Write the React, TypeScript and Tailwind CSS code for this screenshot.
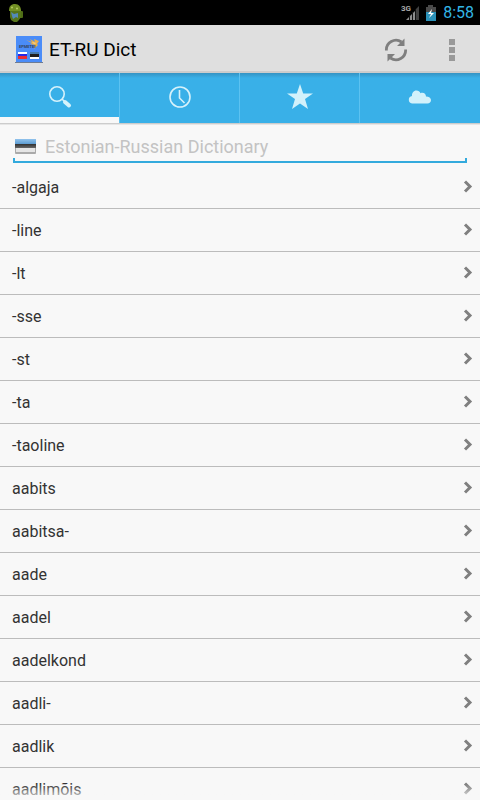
import React, { useState } from "react";

const words = [
  "-algaja", "-line", "-lt", "-sse", "-st", "-ta", "-taoline", "aabits",
  "aabitsa-", "aade", "aadel", "aadelkond", "aadli-", "aadlik", "aadlimõis",
];

function AndroidIcon() {
  return (
    <svg className="h-5 w-4" viewBox="0 0 16 20" aria-hidden="true">
      <rect x="11" y="8" width="4" height="7" rx="1" fill="#4e6c16" />
      <path d="M1 8C1 3 3 1 7 1s6 3 6 7z" fill="#728f24" />
      <path d="M2 8h11v6l-2 3-2 2H6l-3-2-1-3z" fill="#56741a" />
      <circle cx="4" cy="4.500" r="1" fill="#b8cc66" />
      <circle cx="9" cy="5.500" r="1" fill="#b8cc66" />
      <path d="M3 9l3 2 4-1v5l-2-1-3 2-1-3z" fill="#5289b8" />
    </svg>
  );
}

function AppLogo() {
  return (
    <svg className="h-7 w-7" viewBox="0 0 28 28" aria-hidden="true">
      <rect x="1" y="0" width="26" height="26" fill="#4a8cf8" />
      <rect x="0" y="26" width="28" height="1" fill="#6d7c94" />
      <path d="M11 4l6 2-2-3 5 3-1-3 5 2-2 3 1 1-4 4 1-4-5-1 2-1z" fill="#e9ad48" />
      <path d="M17 6l5 1-3 1z" fill="#f4d28c" />
      <text x="4" y="12" fontSize="4" fontWeight="bold" fontFamily="Roboto, sans-serif" fill="#35435f">EPMETEI</text>
      <rect x="3" y="16" width="9" height="7" fill="#fff" />
      <rect x="3" y="18" width="9" height="3" fill="#2828e8" />
      <rect x="3" y="20" width="9" height="3" fill="#e82e39" />
      <rect x="15" y="16" width="9" height="2" fill="#477baf" />
      <rect x="15" y="18" width="9" height="3" fill="#202020" />
      <rect x="15" y="21" width="9" height="2" fill="#fff" />
    </svg>
  );
}

function SignalIcon() {
  return (
    <svg className="h-5 w-5" viewBox="0 0 20 20" aria-hidden="true">
      <text x="0" y="8" fontSize="8" fontWeight="bold" fontFamily="Roboto, sans-serif" fill="#a8a8a8">3G</text>
      <path d="M5 17L14 8v9z" fill="#8d8d8d" />
      <path d="M14 7l4-4v14h-4z" fill="#404040" />
      <path d="M8.500 12v5M11.500 9v8M14.500 6v11" stroke="#111" strokeWidth="1" />
    </svg>
  );
}

function BatteryIcon() {
  return (
    <svg className="h-4 w-3" viewBox="0 0 12 16" aria-hidden="true">
      <path d="M1 2h2V0h5v2h3v5H1z" fill="#4a4a4a" />
      <rect x="1" y="7" width="10" height="9" fill="#2b91b8" />
      <path d="M7 4L3 9h3l-2 4 5-5H6z" fill="#fff" />
    </svg>
  );
}

function RefreshIcon() {
  return (
    <svg className="h-6 w-6" viewBox="0 0 24 24" aria-hidden="true">
      <g fill="none" stroke="#7f7f7f" strokeWidth="2.800">
        <path d="M2.400 12.500A9.600 9.600 0 0 1 17.500 4" />
        <path d="M21.600 11.500A9.600 9.600 0 0 1 6.500 20" />
      </g>
      <path d="M20.500 .5v7.500h-7.500zM3.500 23.500V16h7.500z" fill="#7f7f7f" />
    </svg>
  );
}

const tabs = [
  {
    name: "Search",
    icon: (
      <svg className="h-7 w-7" viewBox="0 0 28 28" aria-hidden="true">
        <circle cx="11" cy="11" r="7.200" fill="none" stroke="#d7f2fb" strokeWidth="1.600" />
        <path d="M16 16l3 3" stroke="#d7f2fb" strokeWidth="1.600" />
        <path d="M19 19l4 3.500" stroke="#d7f2fb" strokeWidth="4" strokeLinecap="round" />
      </svg>
    ),
  },
  {
    name: "History",
    icon: (
      <svg className="h-7 w-7" viewBox="0 0 28 28" aria-hidden="true">
        <g fill="none" stroke="#d7f2fb" strokeWidth="1.600">
          <circle cx="14" cy="14" r="10" />
          <path d="M13.500 7v8l5 5" />
        </g>
      </svg>
    ),
  },
  {
    name: "Favorites",
    icon: (
      <svg className="h-7 w-7" viewBox="0 0 28 28" aria-hidden="true">
        <path d="M14 1l3.200 9.500H27l-8 5.500 3 10-8-5.500L6 26l3-10-8-5.500h9.800z" fill="#d2f1fb" />
      </svg>
    ),
  },
  {
    name: "Cloud",
    icon: (
      <svg className="h-7 w-7" viewBox="0 0 28 28" aria-hidden="true">
        <path d="M6 20.500a3.800 3.800 0 0 1 0-7.500c-.3-3 1.500-5.500 4.500-5.500 2 0 3.200 1 4 2.700 3-1.200 5.500.8 5.500 3.300 3 0 5 1.500 5 3.600 0 2-1.500 3.400-3.500 3.400z" fill="#d2f1fb" />
      </svg>
    ),
  },
];

export default function App() {
  const [active, setActive] = useState(0);
  return (
    <div className="relative flex h-screen flex-col overflow-hidden bg-[#f8f8f8] font-[Roboto,sans-serif] text-[#333333]">
      <div className="flex h-[25px] shrink-0 items-center justify-between bg-black pr-1.5 pl-2">
        <AndroidIcon />
        <div className="flex items-center">
          <SignalIcon />
          <span className="w-1" />
          <BatteryIcon />
          <span className="ml-1.5 text-base leading-6 text-[#33b5e5]">8:58</span>
        </div>
      </div>

      <header className="flex h-12 shrink-0 items-center border-b-2 border-[#cccccc] bg-[#dfdfdf] pt-1 pl-[15px]">
        <AppLogo />
        <h1 className="ml-1.5 flex-1 text-[19px] leading-6 text-black">ET-RU Dict</h1>
        <button type="button" aria-label="Refresh" className="flex h-10 w-14 items-center justify-center">
          <RefreshIcon />
        </button>
        <button type="button" aria-label="More options" className="flex h-10 w-14 flex-col items-center justify-center gap-0.5">
          <span className="size-1.5 bg-[#999999]" />
          <span className="size-1.5 bg-[#999999]" />
          <span className="size-1.5 bg-[#999999]" />
        </button>
      </header>

      <nav className="grid h-[50px] shrink-0 grid-cols-4 bg-linear-to-b from-[#3493c3] via-[#39b0e8] via-10% to-[#39b0e8]">
        {tabs.map((tab, i) => (
          <button
            key={tab.name}
            type="button"
            aria-label={tab.name}
            aria-pressed={active === i}
            onClick={() => setActive(i)}
            className={
              "flex flex-col items-center border-[#5cc2f1] " +
              (i < tabs.length - 1 ? "border-r" : "")
            }
          >
            <span className="flex flex-1 items-center pt-1">{tab.icon}</span>
            <span className={"h-1.5 w-full " + (active === i ? "bg-[#f8f8f8]" : "")} />
          </button>
        ))}
      </nav>

      <div className="shrink-0 border-t border-[#cccccc] px-[13px] shadow-[inset_0_1px_0_#e6e6e6]">
        <div className="flex h-[34px] items-end pl-0.5">
          <label htmlFor="query" className="flex h-6 items-center" aria-label="Estonian-Russian Dictionary">
            <svg className="h-[15px] w-[21px]" viewBox="0 0 21 15" aria-hidden="true">
              <defs>
                <linearGradient id="sky" x1="0" y1="0" x2="0" y2="1">
                  <stop offset="0" stopColor="#91c3ed" /><stop offset="1" stopColor="#5c9bd0" />
                </linearGradient>
                <linearGradient id="coal" x1="0" y1="0" x2="0" y2="1">
                  <stop offset="0" stopColor="#303030" /><stop offset="1" stopColor="#686868" />
                </linearGradient>
              </defs>
              <rect width="21" height="15" rx="1" fill="#aaaaaa" />
              <rect y="0" width="21" height="5" fill="url(#sky)" />
              <rect y="5" width="21" height="4" fill="url(#coal)" />
              <rect x="1" y="9" width="19" height="4" fill="#e5e5e5" />
            </svg>
          </label>
          <input
            id="query"
            type="text"
            placeholder="Estonian-Russian Dictionary"
            className="ml-[9px] h-6 min-w-0 flex-1 bg-transparent pt-0.5 text-lg leading-6 outline-none placeholder:text-[#c3c3c3]"
          />
        </div>
        <div className="h-[5px] border-x-2 border-b-2 border-[#33aadd]" />
      </div>

      <ul className="mt-[3px] min-h-0 flex-1 overflow-hidden">
        {words.map((word) => (
          <li key={word} className="border-b border-[#bcbcbc]">
            <button type="button" className="flex h-[42px] w-full items-center justify-between pr-[7px] pl-3 text-left text-base">
              <span className="pt-0.5">{word}</span>
              <svg className="h-3.5 w-2.5" viewBox="0 0 10 14" aria-hidden="true">
                <path d="M2 1.500l5 5-5 5" fill="none" stroke="#808080" strokeWidth="3" />
              </svg>
            </button>
          </li>
        ))}
      </ul>
      <div className="pointer-events-none absolute inset-x-0 bottom-0 h-4 bg-linear-to-b from-[#f8f8f8]/0 to-[#f8f8f8]/90" />
    </div>
  );
}
